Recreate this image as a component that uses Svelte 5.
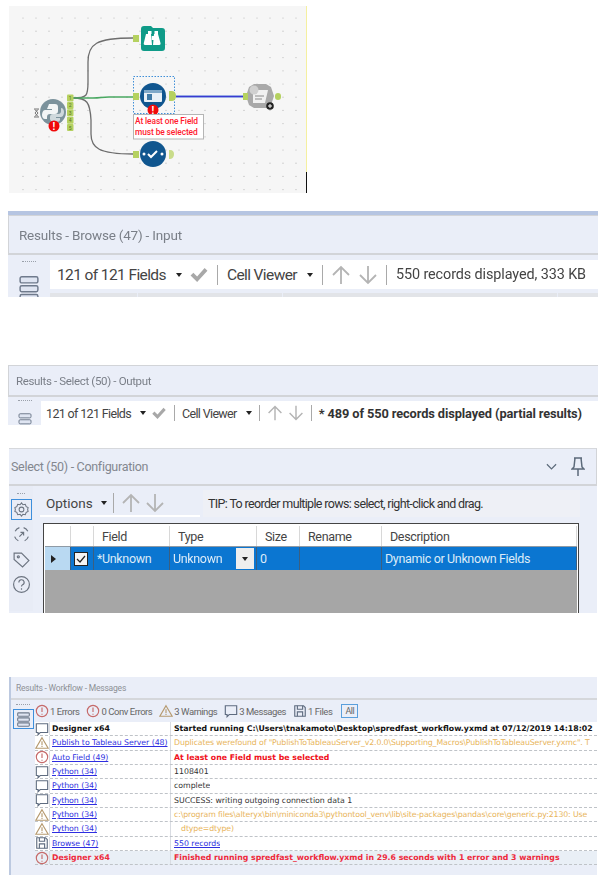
<script>
  const fieldCols = [
    { label: '', w: 26 },
    { label: '', w: 23 },
    { label: 'Field', w: 76 },
    { label: 'Type', w: 87 },
    { label: 'Size', w: 43 },
    { label: 'Rename', w: 82 },
    { label: 'Description', w: 195 }
  ];

  const messages = [
    { icon: 'msg', src: 'Designer x64', text: 'Started running C:\\Users\\tnakamoto\\Desktop\\spredfast_workflow.yxmd at 07/12/2019 14:18:02', kind: 'head' },
    { icon: 'warn', src: 'Publish to Tableau Server (48)', text: 'Duplicates werefound of "PublishToTableauServer_v2.0.0\\Supporting_Macros\\PublishToTableauServer.yxmc". T', kind: 'warning', link: true },
    { icon: 'err', src: 'Auto Field (49)', text: 'At least one Field must be selected', kind: 'error', link: true },
    { icon: 'msg', src: 'Python (34)', text: '1108401', kind: '', link: true },
    { icon: 'msg', src: 'Python (34)', text: 'complete', kind: '', link: true },
    { icon: 'msg', src: 'Python (34)', text: 'SUCCESS: writing outgoing connection data 1', kind: '', link: true },
    { icon: 'warn', src: 'Python (34)', text: 'c:\\program files\\alteryx\\bin\\miniconda3\\pythontool_venv\\lib\\site-packages\\pandas\\core\\generic.py:2130: Use', kind: 'warning', link: true },
    { icon: 'warn', src: 'Python (34)', text: '   dtype=dtype)', kind: 'warning', link: true },
    { icon: 'file', src: 'Browse (47)', text: '550 records', kind: 'records', link: true },
    { icon: 'err', src: 'Designer x64', text: 'Finished running spredfast_workflow.yxmd in 29.6 seconds with 1 error and 3 warnings', kind: 'final' }
  ];

  const summary = [
    { icon: 'err', label: '1 Errors' },
    { icon: 'err', label: '0 Conv Errors' },
    { icon: 'warn', label: '3 Warnings' },
    { icon: 'msg', label: '3 Messages' },
    { icon: 'file', label: '1 Files' }
  ];

  const dotXs = Array.from({ length: 23 }, (_, i) => 14 + i * 13);
  const dotYs = Array.from({ length: 14 }, (_, i) => 12 + i * 13.2);
</script>

{#snippet grip()}
  <div class="grip">
    <span class="dots"></span>
    <svg class="stack" viewBox="0 0 18 24"><rect x="1" y="1" width="16" height="5.500" rx="1.500"/><rect x="1" y="9" width="16" height="5.500" rx="1.500"/><rect x="1" y="17" width="16" height="5.500" rx="1.500"/></svg>
  </div>
{/snippet}

{#snippet arrows()}
  <svg class="arrow" viewBox="0 0 20 20"><path d="M10 19V2M2 10l8-8 8 8"/></svg>
  <svg class="arrow" viewBox="0 0 20 20"><path d="M10 1v17M2 10l8 8 8-8"/></svg>
{/snippet}

{#snippet toolbar(status)}
  <div class="toolbar">
    <span class="tb-label">121 of 121 Fields</span>
    <i class="caret"></i>
    <svg class="tick" viewBox="0 0 20 16"><path d="M1 9l3-3 4 4 8-9 3 3-11 12z"/></svg>
    <b class="sep"></b>
    <span class="tb-label">Cell Viewer</span>
    <i class="caret"></i>
    <b class="sep"></b>
    {@render arrows()}
    <b class="sep"></b>
    {@render status()}
  </div>
{/snippet}

{#snippet msgIcon(kind)}
  <svg class="micon" viewBox="0 0 16 16">
    {#if kind === 'err'}
      <circle cx="8" cy="8" r="6.500" class="red"/><path d="M8 4v5M8 11v1.400" class="red"/>
    {:else if kind === 'warn'}
      <path d="M8 2L15 14H1z" class="tan"/><path d="M8 6v4.500M8 11.500v1" class="tan"/>
    {:else if kind === 'msg'}
      <path d="M1.500 2h13v10H6l-2.500 2.500V12H1.500z" class="slate"/>
    {:else}
      <path d="M2 2h10l2 2v10H2z" class="slate"/><path d="M5 2v4h6V2M5 14V9h6v5" class="slate"/>
    {/if}
  </svg>
{/snippet}

<div class="page">
  <div class="canvas-wrap">
    <svg class="canvas" viewBox="0 0 297 187" width="297" height="187">
      <rect width="297" height="187" fill="#f6f6f6"/>
      {#each dotYs as y}
        {#each dotXs as x}
          <circle cx={x} cy={y} r="0.600" fill="#b9b9b9"/>
        {/each}
      {/each}

      <g transform="translate(-9 -6)">
        <path d="M73 98c14 0 15-2 15-16V62c0-18 8-24 45-24" class="wire gray"/>
        <path d="M73 98c14 0 17 4 18 22v14c0 14 8 20 42 20" class="wire gray"/>
        <path d="M73 98h20c8 0 8-1 16-1h24" class="wire green"/>
        <path d="M176 96.500h67" class="wire halo"/>
        <path d="M176 96.500h67" class="wire blue"/>

        <!-- python -->
        <path d="M34 109h5M34 117h5M35 109.500l3 3.500-3 3.500M38 109.500l-3 3.500 3 3.500" fill="none" stroke="#777" stroke-width="1"/>
        <circle cx="53" cy="112" r="13" fill="#7b929c"/>
        <path d="M49 104h6c2 0 3 1 3 3v4c0 2-1 3-3 3h-5c-2 0-3 1-3 3v2h-2c-2 0-3-2-3-4s1-5 3-5h7v-1h-5z" fill="#f2f5f6"/>
        <path d="M61 108c2 0 3 2 3 4s-1 5-3 5h-5v1h4v2c0 1-2 2-5 2s-5-1-5-3v-2c0-2 1-3 3-3h5c2 0 3-1 3-3z" fill="#cfd9dd"/>
        <g class="ports">
          {#each [1, 2, 3, 4, 5] as n, i}
            <rect x="67" y={94.500 + i * 7.400} width="6.500" height="7" rx="1" fill="#b5d160"/>
            <text x="70.200" y={100 + i * 7.400} class="portnum">{n}</text>
          {/each}
        </g>
        <circle cx="54" cy="126" r="5.500" fill="#f00a0a"/>
        <text x="54" y="129.500" class="bang">!</text>

        <!-- browse -->
        <path d="M141 29c0-2 1-3 3-3h7l2 2h9c2 0 3 1 3 3v17c0 2-1 3-3 3h-18c-2 0-3-1-3-3z" fill="#0f9b88"/>
        <path d="M148 31h3.500v3h-0.500l1 11h-7c-1 0-1.500-1-1.200-2l2.200-9h2zM154.500 31h3.500v3l2.500 9c.3 1-.2 2-1.200 2H153l1-11h.5zM151.800 36h2.400v4h-2.400z" fill="#fff"/>
        <rect x="133" y="35" width="6" height="7" fill="#b5d160"/>

        <!-- select -->
        <rect x="133.500" y="76.500" width="41" height="37" class="selbox"/>
        <circle cx="153" cy="96" r="13" fill="#10568f"/>
        <rect x="144" y="90" width="18" height="12" rx="1" fill="#e9f1f7"/>
        <rect x="144" y="90" width="18" height="3" fill="#7fa9c9"/>
        <rect x="147" y="94" width="5" height="6" fill="#3f7aa6"/>
        <rect x="133" y="93" width="6" height="7" fill="#b5d160"/>
        <path d="M169 91h3c3 0 4 3 4 5s-1 5-4 5h-3z" fill="#b5d160"/>
        <circle cx="153" cy="110" r="5.500" fill="#f00a0a"/>
        <text x="153" y="113.500" class="bang">!</text>

        <!-- publish -->
        <path d="M249 87l5-3h12l5 3 3 9-3 9-5 3h-12l-5-3-3-9z" fill="#a9a9a9"/>
        <path d="M253 90h15l-3 13h-12z" fill="#f1f1f1"/>
        <path d="M255 96h9M255 99h7" stroke="#8a8a8a" stroke-width="1"/>
        <circle cx="254" cy="90" r="4.500" fill="#d0d0d0"/>
        <rect x="243" y="93" width="5" height="7" fill="#b5d160"/>
        <rect x="275" y="93" width="6" height="7" rx="3" fill="#b5d160"/>
        <circle cx="270" cy="106" r="3.800" fill="#222"/>
        <path d="M268 106h4M270 104v4" stroke="#fff" stroke-width="1"/>

        <!-- tooltip -->
        <rect x="133.500" y="114.500" width="70" height="24.500" fill="#fff" stroke="#b5b5b5"/>
        <text x="135" y="124" class="tip">At least one Field</text>
        <text x="135" y="134.500" class="tip">must be selected</text>

        <!-- formula -->
        <circle cx="153" cy="154" r="13" fill="#10568f"/>
        <path d="M148 154l3 3 6-6" fill="none" stroke="#fff" stroke-width="2"/>
        <circle cx="144" cy="154" r="1.500" fill="#fff"/><circle cx="162" cy="154" r="1.500" fill="#fff"/>
        <rect x="133" y="151" width="6" height="7" fill="#b5d160"/>
        <path d="M169 150h1c3 0 4 2 4 4s-1 5-4 5h-1z" fill="#c9dc8a"/>
      </g>
    </svg>
    <div class="edge"></div>
  </div>

  <section class="results browse">
    <header>Results - Browse (47) - Input</header>
    <div class="body">
      {@render grip()}
      {#snippet browseStatus()}<span class="status">550 records displayed, 333 KB</span>{/snippet}
      <div class="main">
        {@render toolbar(browseStatus)}
        <div class="colheads"><u class="ch1"></u><u class="ch2"></u><u class="ch3"></u><u class="ch4"></u></div>
      </div>
    </div>
  </section>

  <section class="results output">
    <header>Results - Select (50) - Output</header>
    <div class="body">
      {@render grip()}
      {#snippet outputStatus()}<strong class="status">* 489 of 550 records displayed (partial results)</strong>{/snippet}
      <div class="main">{@render toolbar(outputStatus)}</div>
    </div>
  </section>

  <section class="config">
    <header>
      <span>Select (50) - Configuration</span>
      <svg class="chev" viewBox="0 0 12 8"><path d="M1 1l5 5 5-5"/></svg>
      <svg class="pin" viewBox="0 0 14 20"><path d="M3 1h8M4 1l-1 9-2 2h12l-2-2-1-9M7 12v7"/></svg>
    </header>
    <div class="cfg-body">
      <div class="side">
        <span class="dots short"></span>
        <span class="side-btn active">
          <svg viewBox="0 0 18 18"><circle cx="9" cy="9" r="2.500"/><path d="M9 2l1.500 2 2.500-.5 1 2.500 2 1-.5 2 .5 2-2 1-1 2.500-2.500-.5L9 16l-1.500-2-2.500.5-1-2.500-2-1 .5-2-.5-2 2-1 1-2.500 2.500.5z"/></svg>
        </span>
        <span class="side-btn">
          <svg viewBox="0 0 18 18"><path d="M3 6a7 7 0 0 1 4-3.500M11 2.500A7 7 0 0 1 15 6M15.500 11a7 7 0 0 1-3.500 4M6 15a7 7 0 0 1-3.500-4M7 11l4-4M8 7h3v3"/></svg>
        </span>
        <span class="side-btn">
          <svg viewBox="0 0 18 18"><path d="M2 3h7l7 7-6 6-8-7z"/><circle cx="6" cy="6.500" r="1"/></svg>
        </span>
        <span class="side-btn">
          <svg viewBox="0 0 18 18"><circle cx="9" cy="9" r="7.500"/><path d="M6.500 7a2.500 2.500 0 1 1 3.500 2.300c-.7.4-1 .8-1 1.700M9 12.500v1.500"/></svg>
        </span>
      </div>
      <div class="cfg-main">
        <div class="optbar">
          <div class="opts">
            <span>Options</span><i class="caret"></i><b class="sep"></b>
            {@render arrows()}
          </div>
          <div class="hint">TIP: To reorder multiple rows: select, right-click and drag.</div>
        </div>
        <div class="grid">
          <div class="grid-head">
            {#each fieldCols as col}
              <span style="width:{col.w}px">{col.label}</span>
            {/each}
          </div>
          <div class="grid-row">
            <span class="rowmark" style="width:{fieldCols[0].w}px"><i></i></span>
            <span class="chk" style="width:{fieldCols[1].w}px">
              <svg viewBox="0 0 14 14"><rect x="0.500" y="0.500" width="13" height="13"/><path d="M3 7l3 3 5-6"/></svg>
            </span>
            <span style="width:{fieldCols[2].w}px">*Unknown</span>
            <span class="typecell" style="width:{fieldCols[3].w}px">Unknown<em><i class="caret"></i></em></span>
            <span style="width:{fieldCols[4].w}px">0</span>
            <span style="width:{fieldCols[5].w}px"></span>
            <span style="width:{fieldCols[6].w}px">Dynamic or Unknown Fields</span>
          </div>
          <div class="grid-empty"></div>
        </div>
      </div>
    </div>
  </section>

  <section class="messages">
    <header>Results - Workflow - Messages</header>
    <div class="msg-body">
      <div class="msg-side">
        <span class="dots"></span>
        <span class="msg-stack">
          <svg class="stack" viewBox="0 0 18 18"><rect x="2" y="1" width="14" height="4" rx="1"/><rect x="2" y="7" width="14" height="4" rx="1"/><rect x="2" y="13" width="14" height="4" rx="1"/></svg>
        </span>
      </div>
      <div class="msg-main">
        <div class="summary">
          {#each summary as item}
            <span class="sum">{@render msgIcon(item.icon)}{item.label}</span>
          {/each}
          <span class="all">All</span>
        </div>
        <div class="log">
          {#each messages as m}
            <div class="logrow {m.kind}">
              <span class="c-icon">{@render msgIcon(m.icon)}</span>
              <span class="c-src" class:link={m.link}>{m.src}</span>
              <span class="c-text">{m.text}</span>
            </div>
          {/each}
        </div>
      </div>
    </div>
  </section>
</div>

<style>
  :global(body) {
    margin: 0;
    background: #fff;
  }

  .page {
    width: 611px;
    height: 889px;
    overflow: hidden;
    display: flex;
    flex-direction: column;
    font-family: Roboto, "Liberation Sans", sans-serif;
    color: #333;
    filter: blur(0.35px);
  }

  /* canvas */
  .canvas-wrap {
    display: flex;
    margin: 6px 0 0 9px;
    height: 187px;
  }
  .canvas { display: block; }
  .edge {
    width: 1px;
    height: 187px;
    background: linear-gradient(#f5f0a0 0 166px, #111 166px);
  }
  .wire { fill: none; stroke-width: 1.300; }
  .gray { stroke: #6d6d6d; }
  .green { stroke: #4aa862; }
  .blue { stroke: #3a3ad0; stroke-width: 1.500; }
  .halo { stroke: #b9d2ee; stroke-width: 3; }
  .selbox { fill: none; stroke: #3f8fd8; stroke-dasharray: 1.500 1.500; }
  .portnum { font: 5px Roboto, sans-serif; text-anchor: middle; fill: #55702a; }
  .bang { font: bold 10px "Liberation Sans", sans-serif; text-anchor: middle; fill: #fff; }
  .tip { font: 500 8.400px Roboto, sans-serif; fill: #ff1a2e; letter-spacing: -0.1px; }

  /* results panels */
  .results {
    margin-left: 8px;
    width: 590px;
    background: #eaeef8;
    overflow: hidden;
  }
  .results header {
    color: #7a7f88;
    border: 1px solid #d2d4d8;
    border-width: 1px 0 2px 1px;
    box-sizing: border-box;
    display: flex;
    align-items: center;
  }
  .browse {
    margin-top: 18px;
    height: 82px;
    border-top: 4px solid #b6c5e2;
  }
  .browse header { height: 40px; padding-left: 10px; font-size: 13.500px; letter-spacing: -0.2px; }
  .output {
    margin-top: 68px;
    height: 60px;
  }
  .output header { height: 32px; padding-left: 7px; font-size: 11.500px; letter-spacing: -0.35px; }

  .body { display: flex; }
  .grip {
    display: flex;
    flex-direction: column;
    align-items: center;
    flex: none;
  }
  .dots {
    display: block;
    width: 14px;
    border-top: 1px dotted #9aa0aa;
  }
  .dots.short { width: 8px; }
  .stack { fill: #dfe5f2; stroke: #6f7a8c; stroke-width: 1.300; display: block; }
  .browse .grip { width: 42px; padding-top: 6px; }
  .browse .grip .stack { width: 20px; height: 30px; margin-top: 12px; }
  .output .grip { width: 33px; padding-top: 3px; }
  .output .grip .stack { width: 14px; height: 18px; margin-top: 12px; }
  .main { flex: 1; min-width: 0; }
  .browse .main { padding-top: 5px; }
  .output .main { padding-top: 4px; }

  .toolbar {
    display: flex;
    align-items: center;
    background: #fff;
    white-space: nowrap;
    color: #444;
  }
  .browse .toolbar { height: 29px; padding-left: 7px; font-size: 15.500px; gap: 6.500px; }
  .output .toolbar { height: 24px; padding-left: 5px; font-size: 12.500px; gap: 5px; }
  .tb-label { letter-spacing: -0.6px; }
  .output .tb-label { letter-spacing: -0.65px; }
  .caret {
    display: inline-block;
    width: 0;
    height: 0;
    border: 3px solid transparent;
    border-top: 4px solid #222;
    border-bottom: 0;
    margin-left: 4px;
  }
  .tick { width: 20px; height: 15px; fill: #a8a8a8; }
  .output .tick { width: 16px; height: 12px; }
  .sep { width: 1px; height: 20px; background: #a9a9a9; margin: 0 2px; }
  .output .sep { height: 16px; }
  .arrow { width: 20px; height: 20px; fill: none; stroke: #b4b4b4; stroke-width: 1.800; }
  .output .arrow { width: 16px; height: 16px; }
  .status { letter-spacing: -0.1px; }
  .browse .status { font-size: 14.400px; }
  .output strong.status { font-size: 12.800px; font-weight: 700; color: #333; }

  .colheads { display: flex; gap: 1px; padding-top: 4px; }
  .colheads u { height: 6px; background: #e2e4e8; }
  .ch1 { width: 87px; }
  .ch2 { width: 145px; }
  .ch3 { width: 275px; }
  .ch4 { width: 40px; }

  /* configuration */
  .config {
    margin: 23px 0 0 9px;
    width: 588px;
    height: 165px;
    background: #eaeef8;
    overflow: hidden;
  }
  .config header {
    height: 38px;
    display: flex;
    align-items: center;
    border-top: 1px solid #d6d8dc;
    border-bottom: 2px solid #d2d4d8;
    border-right: 1px solid #d2d4d8;
    box-sizing: border-box;
    padding-left: 2px;
    color: #83878f;
    font-size: 12.500px;
    letter-spacing: -0.3px;
  }
  .config header span { flex: 1; }
  .chev { width: 11px; height: 8px; fill: none; stroke: #5c6a7a; stroke-width: 1.300; margin-right: 14px; }
  .pin { width: 14px; height: 20px; fill: none; stroke: #5c6a7a; stroke-width: 1.500; margin-right: 11px; }
  .cfg-body { display: flex; height: 125px; }
  .side {
    width: 24px;
    flex: none;
    display: flex;
    flex-direction: column;
    align-items: center;
    gap: 4px;
    padding-top: 7px;
    background: #e8ecf6;
    box-sizing: border-box;
  }
  .side-btn {
    width: 21px;
    height: 21px;
    display: flex;
    align-items: center;
    justify-content: center;
    box-sizing: border-box;
  }
  .side-btn svg { width: 19px; height: 19px; fill: none; stroke: #6c7480; stroke-width: 1.100; }
  .side-btn.active { border: 1px solid #3d8fdc; margin-top: 1px; }
  .side-btn.active svg { width: 17px; height: 17px; }
  .cfg-main { flex: 1; min-width: 0; padding: 4px 17px 0 7px; }
  .optbar { display: flex; gap: 3px; height: 27px; }
  .opts {
    width: 160px;
    display: flex;
    align-items: center;
    gap: 4px;
    padding-left: 6px;
    box-sizing: border-box;
    font-size: 13.500px;
    color: #444;
    border-bottom: 2px solid #fff;
  }
  .opts .sep { margin: 0 3px 0 2px; }
  .hint {
    flex: 1;
    display: flex;
    align-items: center;
    padding-left: 5px;
    background: #eef0f6;
    font-size: 12.500px;
    letter-spacing: -0.65px;
    color: #333;
  }
  .grid {
    margin: 6px 0 0 3px;
    border: 1px solid #444;
    border-bottom: 0;
    padding: 2px 1px 0;
    background: #fff;
    height: 91px;
    width: 536px;
    box-sizing: border-box;
    display: flex;
    flex-direction: column;
  }
  .grid-head, .grid-row { display: flex; flex: none; }
  .grid-head { height: 20px; }
  .grid-head span {
    box-sizing: border-box;
    border-right: 1px solid #d8d8d8;
    text-align: left;
    padding: 1px 0 0 8px;
    font-size: 12.500px;
    letter-spacing: -0.35px;
    color: #444;
    display: flex;
    align-items: center;
  }
  .grid-row {
    height: 24px;
    background: #0b76d1;
    border-top: 1px solid #8f9aa5;
    box-sizing: border-box;
    color: #dcebf8;
    font-size: 12.500px;
    letter-spacing: -0.35px;
  }
  .grid-row span {
    box-sizing: border-box;
    border-right: 1px solid #3c5f80;
    display: flex;
    align-items: center;
    padding-left: 3px;
  }
  .rowmark { background: #b9d9f2; }
  .rowmark i {
    width: 0;
    height: 0;
    border: 4px solid transparent;
    border-left: 5px solid #222;
    border-right: 0;
    margin-left: 3px;
  }
  .chk svg { width: 14px; height: 14px; fill: #f4f4f4; stroke: #222; }
  .chk svg path { fill: none; stroke-width: 1.200; }
  .typecell { position: relative; }
  .typecell em {
    position: absolute;
    right: 2px;
    top: 1px;
    bottom: 1px;
    width: 18px;
    background: #eee;
    display: flex;
    align-items: center;
    justify-content: center;
  }
  .typecell .caret { margin: 0; }
  .grid-empty { flex: 1; background: #a6a6a6; }

  /* messages */
  .messages {
    margin: 64px 0 0 9px;
    width: 588px;
    height: 198px;
    background: #eaeef8;
    border-left: 2px solid #bcc9e0;
    box-sizing: border-box;
    overflow: hidden;
  }
  .messages header {
    height: 23px;
    display: flex;
    align-items: center;
    padding-left: 5px;
    box-sizing: border-box;
    border-bottom: 2px solid #d5d7db;
    font-size: 8.500px;
    letter-spacing: -0.2px;
    color: #8d9096;
  }
  .msg-body { display: flex; }
  .msg-side {
    width: 24px;
    flex: none;
    display: flex;
    flex-direction: column;
    align-items: center;
    padding-top: 4px;
    gap: 4px;
  }
  .msg-stack {
    width: 21px;
    height: 20px;
    border: 1px solid #3d8fdc;
    box-sizing: border-box;
    display: flex;
    align-items: center;
    justify-content: center;
  }
  .msg-stack .stack { width: 15px; height: 15px; }
  .msg-main { flex: 1; min-width: 0; }
  .summary {
    height: 22px;
    display: flex;
    align-items: center;
    gap: 7px;
    font-size: 9.500px;
    letter-spacing: -0.45px;
    color: #666;
  }
  .sum { display: flex; align-items: center; gap: 1px; }
  .all {
    border: 1px solid #5a9fdc;
    padding: 1px 3px;
    margin-left: 2px;
    font-size: 9px;
  }
  .micon { width: 14px; height: 14px; flex: none; fill: none; stroke-width: 1.300; }
  .red { stroke: #c66a6a; }
  .tan { stroke: #b69a70; }
  .slate { stroke: #5f6c80; }
  .log { background: #fff; overflow: hidden; }
  .logrow {
    display: flex;
    height: 14.330px;
    box-sizing: border-box;
    border-bottom: 1px dashed #bfc3c8;
    font-family: "DejaVu Sans", sans-serif;
    font-size: 7.800px;
    line-height: 13px;
    white-space: pre;
    color: #333;
  }
  .c-icon {
    width: 15px;
    flex: none;
    display: flex;
    align-items: center;
    justify-content: center;
    border-right: 1px solid #d9dce2;
    box-sizing: border-box;
  }
  .c-src {
    width: 121px;
    flex: none;
    padding-left: 2px;
    box-sizing: border-box;
    border-right: 1px solid #d9dce2;
  }
  .c-text { padding-left: 3px; overflow: hidden; }
  .link { color: #2e2ee0; text-decoration: underline; letter-spacing: -0.05px; }
  .head .c-src, .head .c-text { font-weight: 700; color: #111; }
  .warning .c-text { color: #e8b45a; letter-spacing: -0.12px; }
  .error .c-text { color: #f01020; font-weight: 700; }
  .records .c-text { color: #2e2ee0; text-decoration: underline; }
  .final { background: #e9eff6; }
  .final .c-src, .final .c-text { color: #ee2a3c; font-weight: 700; }
</style>
